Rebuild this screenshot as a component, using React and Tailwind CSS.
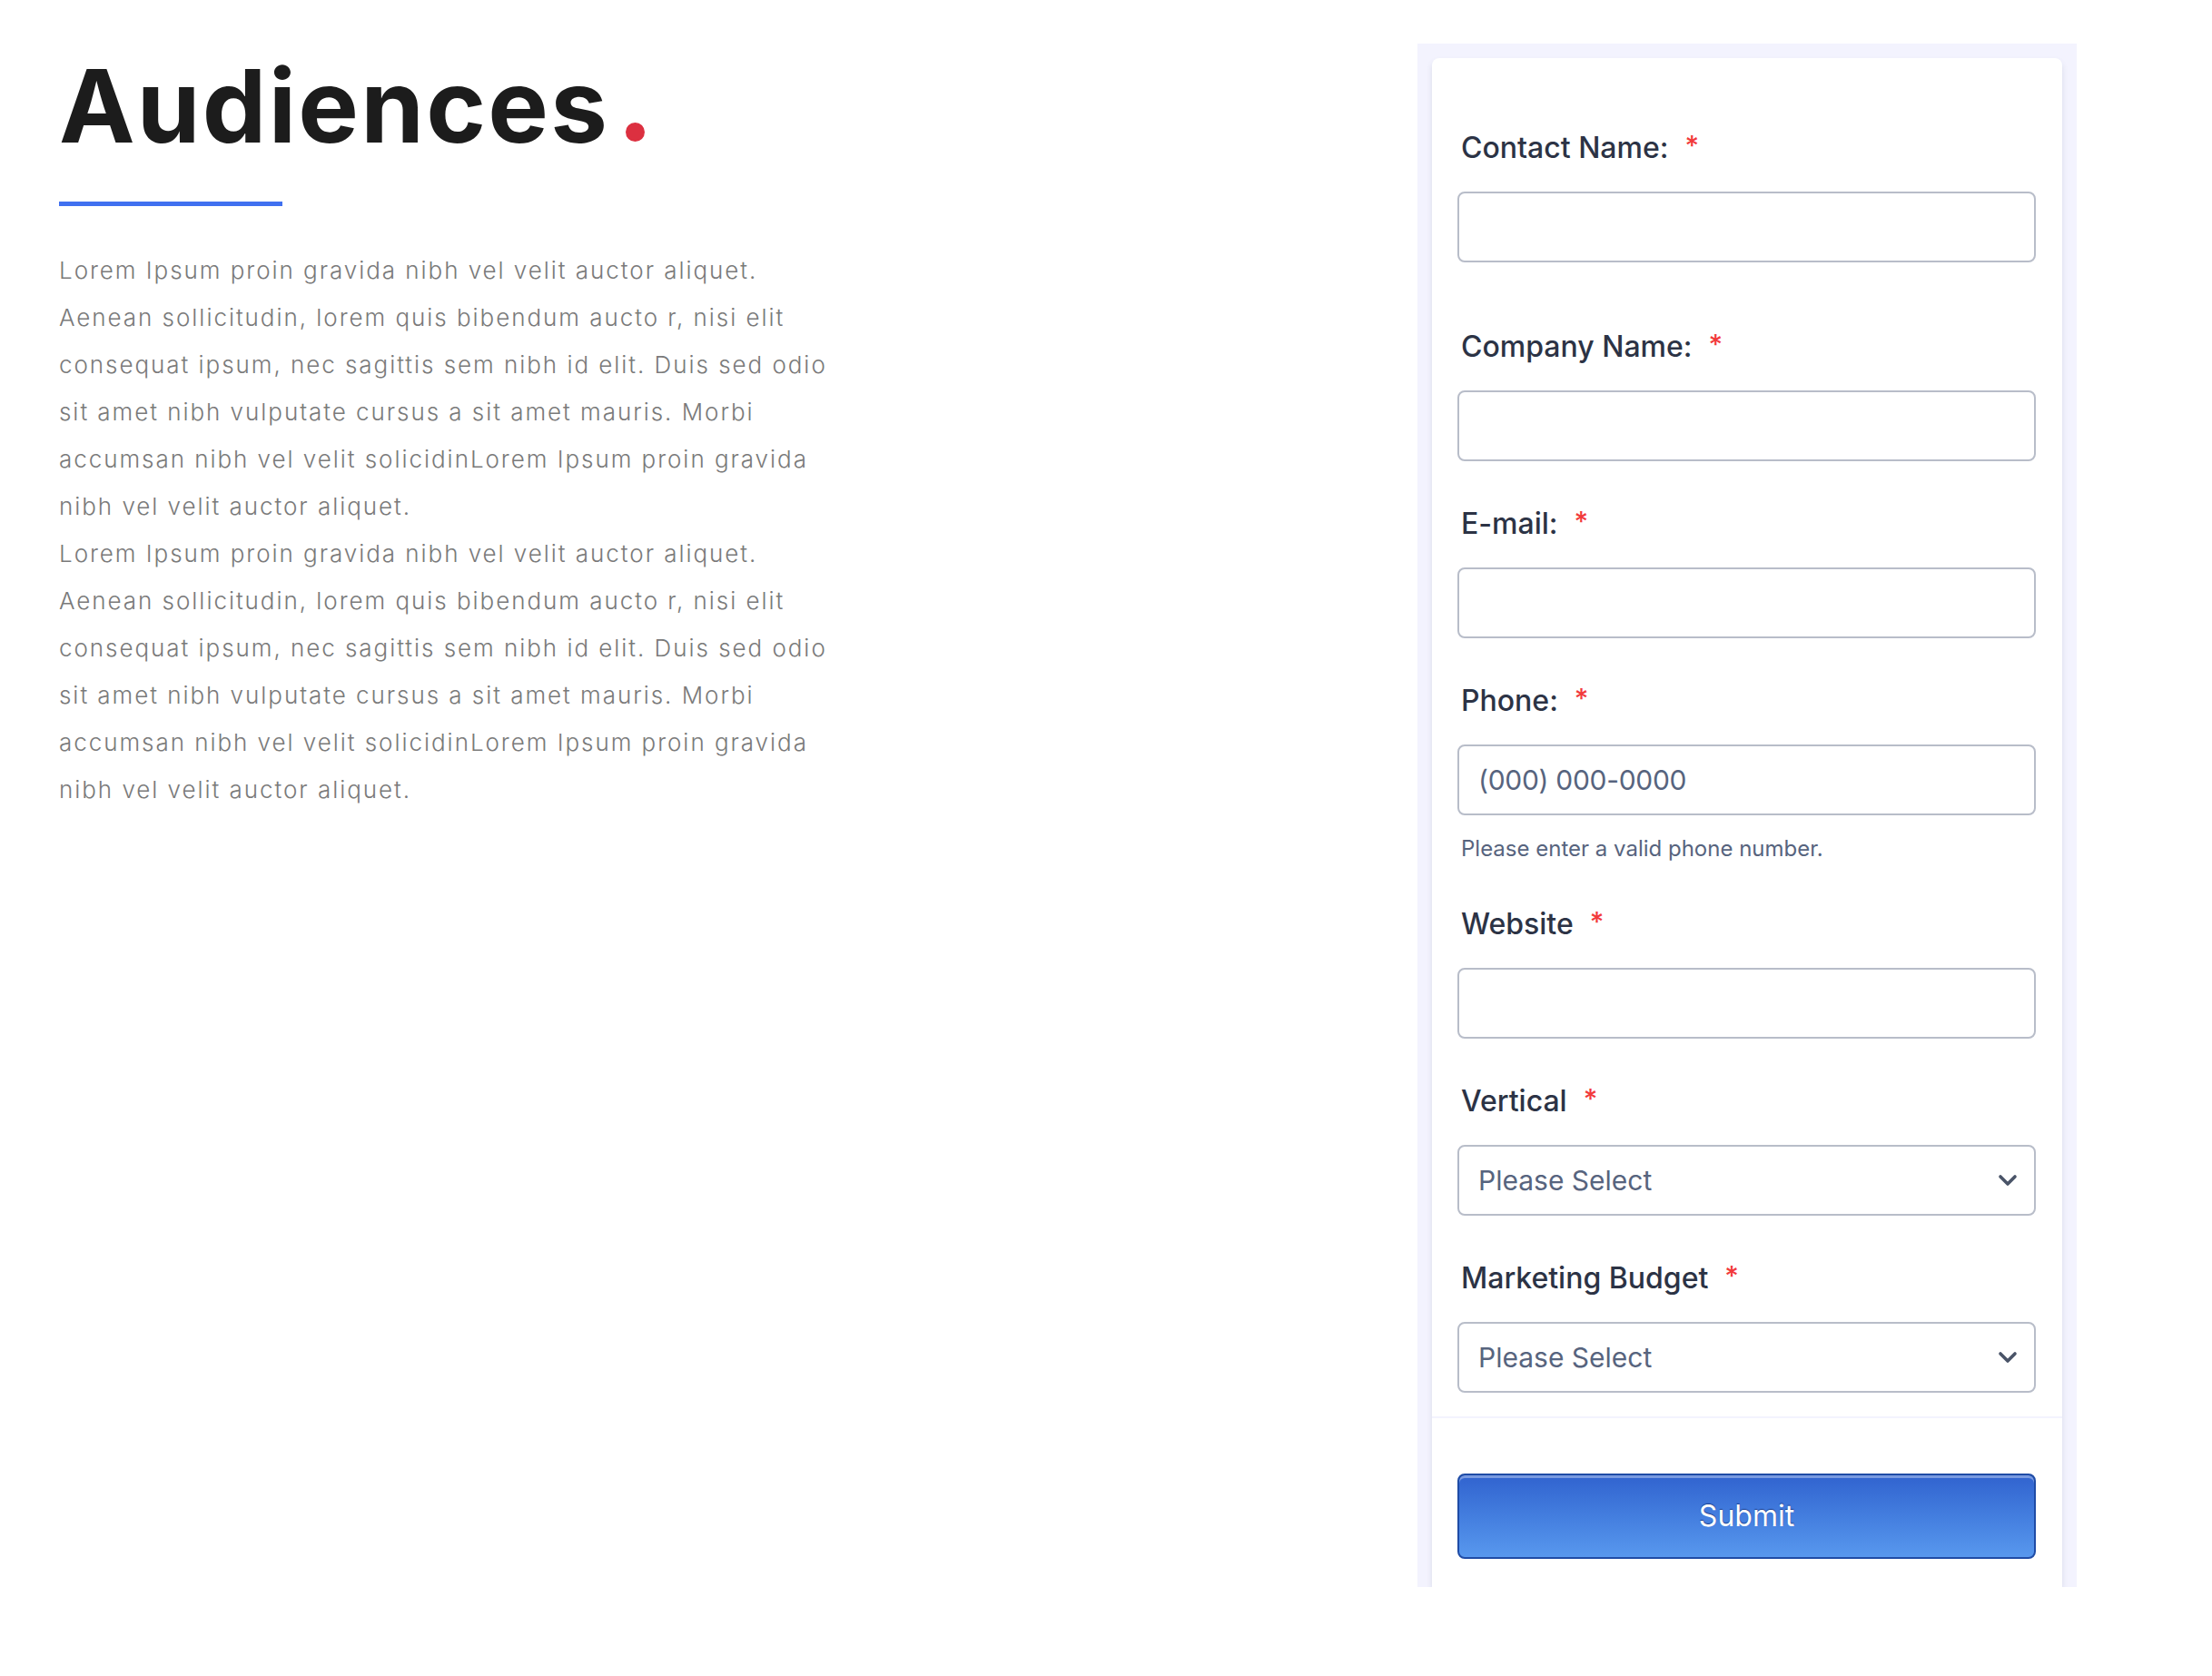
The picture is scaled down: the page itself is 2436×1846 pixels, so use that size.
import { useState } from 'react'

const LOREM =
  'Lorem Ipsum proin gravida nibh vel velit auctor aliquet. Aenean sollicitudin, lorem quis bibendum aucto r, nisi elit consequat ipsum, nec sagittis sem nibh id elit. Duis sed odio sit amet nibh vulputate cursus a sit amet mauris. Morbi accumsan nibh vel velit solicidinLorem Ipsum proin gravida nibh vel velit auctor aliquet.'

const FIELDS = [
  { id: 'contact', label: 'Contact Name:', gap: 'mt-0' },
  { id: 'company', label: 'Company Name:', gap: 'mt-[73px]' },
  { id: 'email', label: 'E-mail:', gap: 'mt-[49px]' },
  { id: 'phone', label: 'Phone:', gap: 'mt-[49px]', placeholder: '(000) 000-0000', help: 'Please enter a valid phone number.' },
  { id: 'website', label: 'Website', gap: 'mt-[48px]' },
  { id: 'vertical', label: 'Vertical', gap: 'mt-[49px]', select: true },
  { id: 'budget', label: 'Marketing Budget', gap: 'mt-[49px]', select: true },
]

function Chevron() {
  return (
    <svg width="22" height="14" viewBox="0 0 22 14" fill="none">
      <path d="M3 3l8 8 8-8" stroke="#4a5468" strokeWidth="3.6" strokeLinecap="round" strokeLinejoin="round" />
    </svg>
  )
}

function Field({ f, value, onChange }) {
  return (
    <div className={f.gap}>
      {/* label + required mark */}
      <label htmlFor={f.id} className="flex items-center h-[40px] pl-[4px] text-[32px] leading-[40px] font-medium text-[#2c3345]">
        {f.label}
        <span className="ml-[18px] text-[#f23a3c] text-[30px] -mt-[6px]">*</span>
      </label>

      {f.select ? (
        <div className="relative mt-[28px]">
          <select
            id={f.id}
            value={value}
            onChange={e => onChange(e.target.value)}
            className="appearance-none w-full h-[78px] rounded-[8px] border-2 border-[#b8bdc9] bg-white pl-[21px] pr-[60px] text-[30px] text-[#57647e] outline-none"
          >
            <option value="">Please Select</option>
          </select>
          <span className="absolute right-[20px] top-[32px] pointer-events-none">
            <Chevron />
          </span>
        </div>
      ) : (
        <input
          id={f.id}
          value={value}
          onChange={e => onChange(e.target.value)}
          placeholder={f.placeholder || ''}
          className="block mt-[28px] w-full h-[78px] rounded-[8px] border-2 border-[#b8bdc9] bg-white px-[21px] text-[30px] tracking-[-0.01em] text-[#2c3345] placeholder:text-[#57647e] outline-none"
        />
      )}

      {f.help && (
        <p className="mt-[22px] pl-[4px] text-[24px] leading-[30px] text-[#57647e]">{f.help}</p>
      )}
    </div>
  )
}

export default function App() {
  const [values, setValues] = useState({})

  return (
    <div className="min-h-[1846px] bg-white flex justify-between pl-[65px] pr-[149px] pt-[48px]" style={{ fontFamily: 'Inter, "Open Sans", sans-serif' }}>

      {/* ── Left: intro copy ── */}
      <div className="w-[862px]">
        <h1 className="mt-[12px] flex items-end text-[112px] leading-[112px] font-bold tracking-[0.02em] text-[#1c1c1c]">
          Audiences
          <span className="inline-block w-[21px] h-[21px] rounded-full bg-[#dc3040] ml-[18px] mb-[16px]" />
        </h1>
        <div className="mt-[50px] w-[246px] h-[5px] bg-[#4070f0]" />
        <div className="mt-[45px] text-[26px] leading-[52px] tracking-[0.075em] font-light text-[#7a7a7a]">
          <p>{LOREM}</p>
          <p>{LOREM}</p>
        </div>
      </div>

      {/* ── Right: form card ── */}
      <div className="w-[726px] h-[1700px] bg-[#f3f3fe] px-4 pt-4 overflow-hidden">
        <div className="h-full bg-white rounded-t-[8px] shadow-[0_4px_6px_rgba(87,100,126,0.16)]">
          <div className="px-[28px] pr-[29px] pt-[79px]">
            {FIELDS.map(f => (
              <Field
                key={f.id}
                f={f}
                value={values[f.id] || ''}
                onChange={v => setValues(s => ({ ...s, [f.id]: v }))}
              />
            ))}
          </div>

          <div className="mt-[26px] h-[2px] bg-[#f3f3fe]" />

          <div className="px-[28px] pr-[29px] pt-[61px]">
            <button
              type="button"
              className="w-full h-[94px] rounded-[8px] border-2 border-[#1f4ca6] bg-linear-to-b from-[#3163cf] to-[#5898ee] shadow-[inset_0_3px_0_rgba(255,255,255,0.35)] text-[32px] text-white [text-shadow:0_-1px_1px_#1a3f8f]"
            >
              Submit
            </button>
          </div>
        </div>
      </div>
    </div>
  )
}
